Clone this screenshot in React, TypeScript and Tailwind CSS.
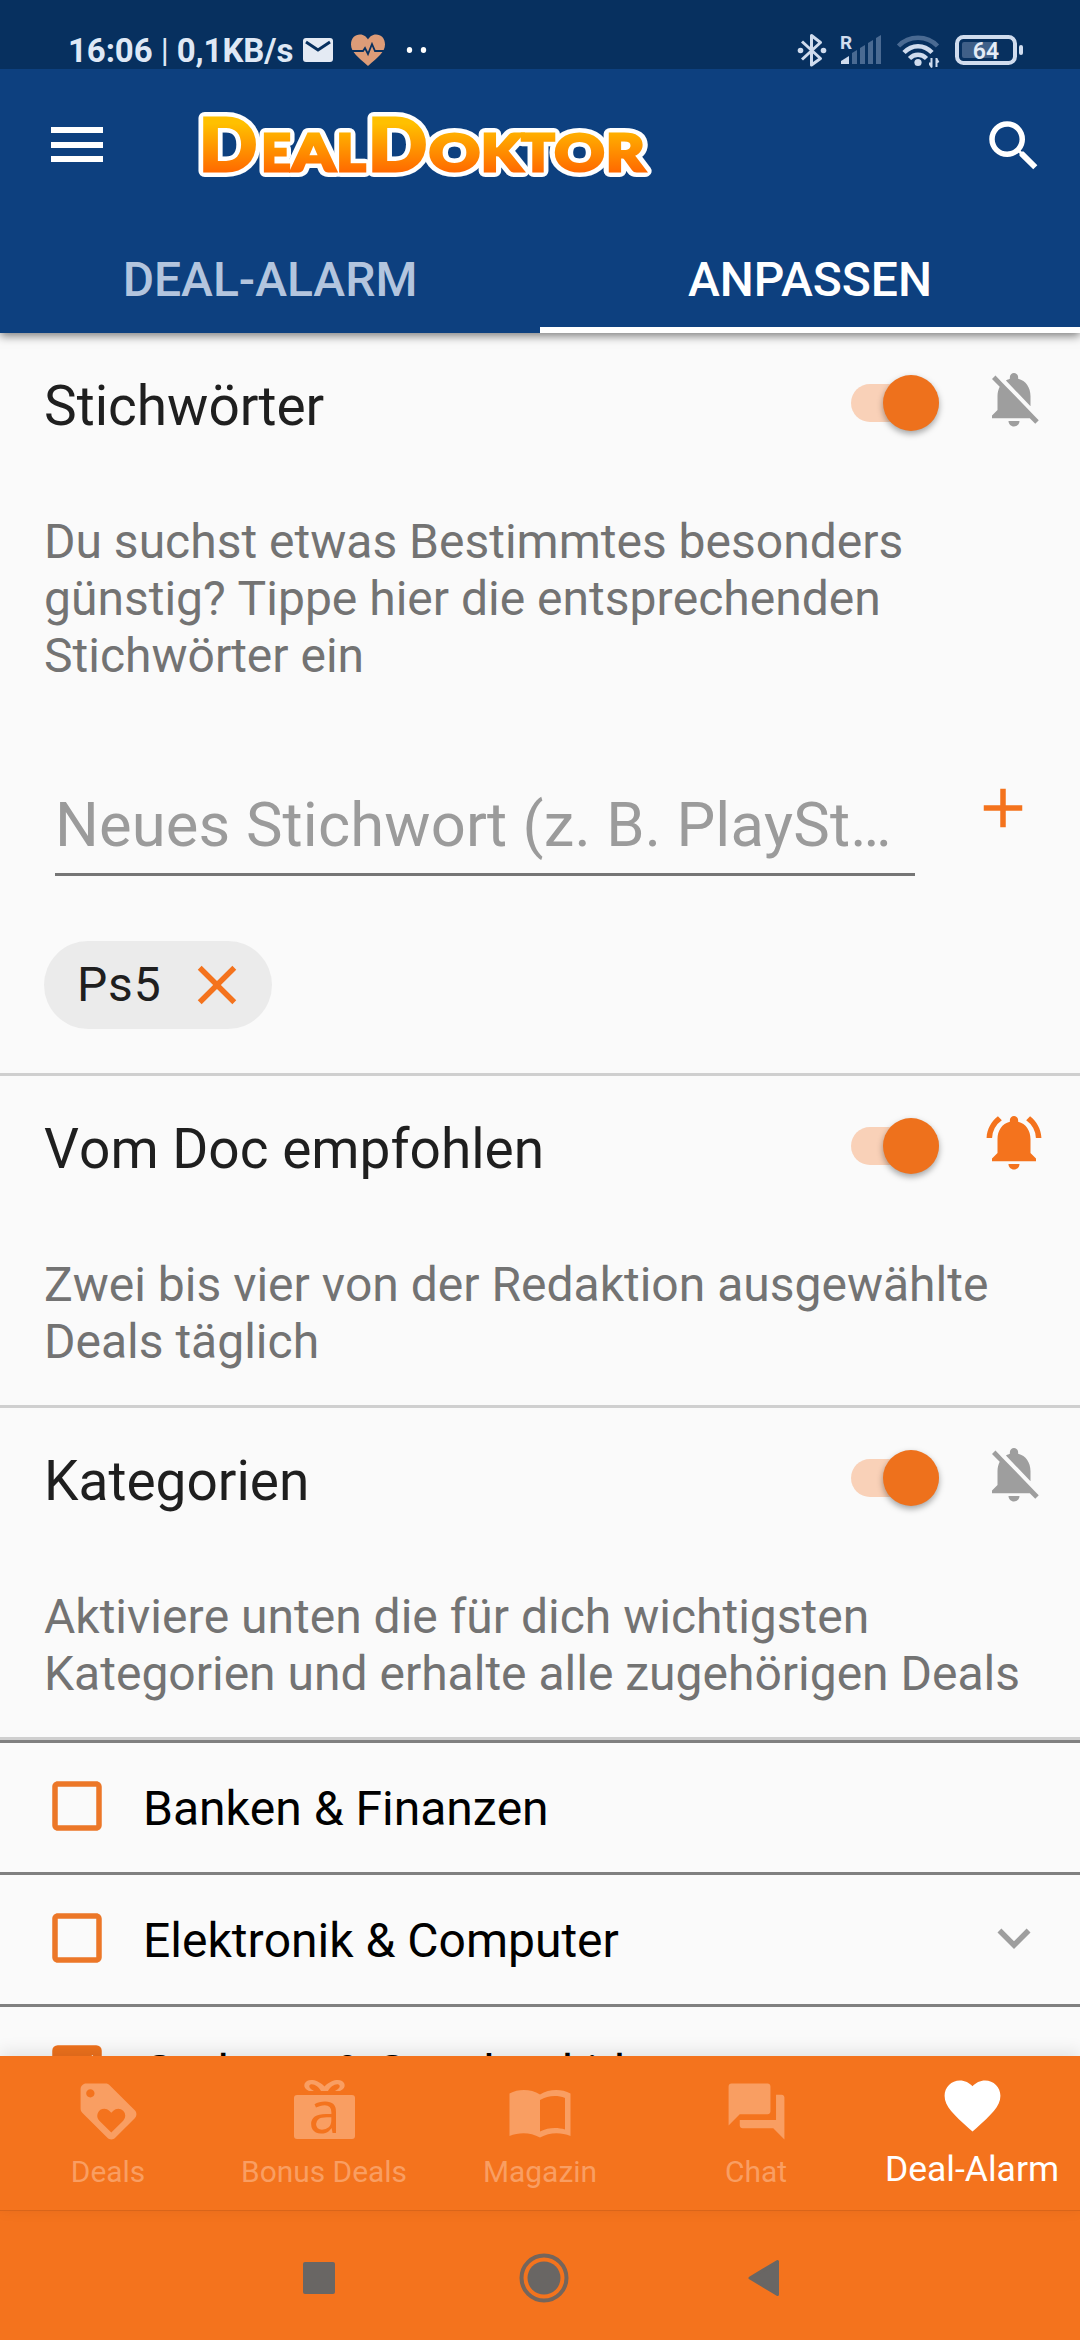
import { useState } from "react";
import {
  MdAdd,
  MdCheckBox,
  MdCheckBoxOutlineBlank,
  MdClose,
  MdExpandMore,
  MdFavorite,
  MdForum,
  MdLoyalty,
  MdNotificationsActive,
  MdNotificationsOff,
  MdSearch,
} from "react-icons/md";

function StatusBar() {
  return (
    <div className="flex h-[69px] items-start bg-[#07305f] text-[#dfe8f5]">
      <div className="flex h-[69px] items-center pt-[33px] pl-[68px]">
        <span className="w-[235px] text-[33px] leading-[36px] font-bold tracking-[-0.1px] whitespace-nowrap">
          16:06 <span className="font-normal">|</span> 0,1KB/s
        </span>
        <svg className="h-[36px] w-[130px]" viewBox="303 33 130 36">
          <rect x="303" y="38" width="30" height="24" rx="3" fill="#e4eaf4" />
          <path d="M306 42l12 8 12-8" fill="none" stroke="#07305f" strokeWidth="3" />
          <path d="M368 66C358 57 351 52 351 44.500C351 38 355 34.500 360 34.500C364 34.500 366.500 37 368 39.500C369.500 37 372 34.500 376 34.500C381 34.500 385 38 385 44.500C385 52 378 57 368 66Z" fill="#dd9c78" />
          <path d="M351 51h12l2-3 3 6 4-10 3 7h10" fill="none" stroke="#07305f" strokeWidth="1.800" />
          <ellipse cx="409.500" cy="50" rx="2.700" ry="3" fill="#fff" />
          <ellipse cx="423.500" cy="50" rx="2.700" ry="3" fill="#fff" />
        </svg>
      </div>
      <svg className="ml-auto h-[69px] w-[290px]" viewBox="790 0 290 69" fill="#d0dcee">
        <path d="M802 41.500L820.500 58.500L811.500 65V35.500L820.500 42.500L802 59.500" fill="none" stroke="#d0dcee" strokeWidth="3" strokeLinejoin="round" />
        <circle cx="800.500" cy="50.500" r="2.800" />
        <circle cx="823.500" cy="50.500" r="2.800" />
        <text x="840" y="48.500" fontSize="19" fontWeight="700">R</text>
        <path d="M841 64v-3l8-5v8z" />
        <g fill="#4a6a92">
          <path d="M852 64V53l5-3v14z" />
          <path d="M860 64V48l5-3v19z" />
          <path d="M868 64V43l5-3v24z" />
          <path d="M876 64V38l5-3v29z" />
        </g>
        <g fill="none" strokeWidth="4.500">
          <path d="M898.500 46C909 35 927 35 937.500 46" stroke="#4a6a92" />
          <path d="M904 52.500C912 44 924 44 932 52.500" stroke="#d0dcee" />
          <path d="M909.500 58.500C914.500 53.500 921.500 53.500 926.500 58.500" stroke="#d0dcee" />
        </g>
        <circle cx="918" cy="62.500" r="3.600" />
        <path d="M931.500 58v9M936.500 58v9M930 62.500v2l2 3M938.500 62.500l-2-3.500" fill="none" stroke="#d0dcee" strokeWidth="2" />
        <rect x="957" y="37" width="58" height="26" rx="6.500" fill="none" stroke="#d0dcee" strokeWidth="4" />
        <rect x="962" y="42" width="31" height="16" rx="2" fill="#3f5f88" />
        <rect x="1019" y="45" width="4" height="10" rx="2" />
        <text x="986" y="59" fontSize="23" fontWeight="600" textAnchor="middle" fill="#e4ecf7">64</text>
      </svg>
    </div>
  );
}

// x and width per letter, the two capitals are set larger
const LOGO_LETTERS = [
  { char: "D", x: 199, width: 58, size: 73 },
  { char: "E", x: 261.5, width: 29, size: 52 },
  { char: "A", x: 292, width: 43, size: 52 },
  { char: "L", x: 336.5, width: 29, size: 52 },
  { char: "D", x: 368, width: 59, size: 73 },
  { char: "O", x: 429, width: 51, size: 52 },
  { char: "K", x: 481, width: 41, size: 52 },
  { char: "T", x: 521.5, width: 33, size: 52 },
  { char: "O", x: 554.5, width: 50, size: 52 },
  { char: "R", x: 606, width: 38.5, size: 52 },
];

function Logo() {
  return (
    <svg className="h-[104px] w-[470px] font-['Lato',sans-serif] font-black" viewBox="190 90 470 104" aria-label="DealDoktor">
      <defs>
        <linearGradient id="logo" gradientUnits="userSpaceOnUse" x1="0" y1="118" x2="0" y2="172">
          <stop offset="0.1" stopColor="#ffc000" />
          <stop offset="1" stopColor="#ff6a00" />
        </linearGradient>
      </defs>
      {["outline", "fill"].map((layer) => (
        <g
          key={layer}
          fill={layer === "fill" ? "url(#logo)" : "#fff"}
          stroke={layer === "fill" ? "url(#logo)" : "#fff"}
          strokeWidth={layer === "fill" ? 3 : 12}
          strokeLinejoin={layer === "fill" ? "miter" : "round"}
        >
          {LOGO_LETTERS.map((l) => (
            <text key={l.x} x={l.x} y="171.200" fontSize={l.size} textLength={l.width} lengthAdjust="spacingAndGlyphs">
              {l.char}
            </text>
          ))}
        </g>
      ))}
    </svg>
  );
}

function Header() {
  return (
    <header className="relative z-10 bg-[#0d407f] shadow-[0_3px_9px_rgba(0,0,0,0.5)]">
      <StatusBar />
      <div className="flex h-[156px] items-start pt-[21px]">
        <button className="mt-[37px] ml-[51px] flex w-[52px] flex-col gap-[8.500px]" aria-label="Menü">
          <span className="h-[6px] w-full bg-white" />
          <span className="h-[6px] w-full bg-white" />
          <span className="h-[6px] w-full bg-white" />
        </button>
        <div className="ml-[87px]">
          <Logo />
        </div>
        <button className="mt-[23px] mr-[33px] ml-auto text-white" aria-label="Suche">
          <MdSearch className="size-[66px]" />
        </button>
      </div>
      <nav className="grid h-[108px] grid-cols-2 text-center text-[48px] leading-[102px] font-medium [font-kerning:normal]">
        <a className="pt-[4px] text-[#b3c5de]">DEAL-ALARM</a>
        <a className="flex flex-col justify-between pt-[4px] text-white">
          <span className="h-[98px]">ANPASSEN</span>
          <span className="h-[6px] bg-white" />
        </a>
      </nav>
    </header>
  );
}

function Toggle() {
  const [on, setOn] = useState(true);

  return (
    <button
      className={on ? "flex h-[38px] w-[88px] items-center justify-end rounded-full bg-[#f9d1b8]" : "flex h-[38px] w-[88px] items-center rounded-full bg-[#bdbdbd]"}
      onClick={() => setOn(!on)}
      role="switch"
      aria-checked={on}
    >
      <span className="size-[56px] shrink-0 rounded-full bg-[#ee711c] shadow-[0_3px_6px_rgba(0,0,0,0.35)]" />
    </button>
  );
}

interface SectionProps {
  title: string;
  lines: string[];
  notify?: boolean;
  children?: React.ReactNode;
}

function Section({ title, lines, notify, children }: SectionProps) {
  return (
    <section className="border-b-[3px] border-[#cfcfcf]">
      <div className="flex h-[140px] items-center pr-[33px] pl-[44px]">
        <h2 className="pt-[6px] text-[55px] leading-[66px] text-[#1f1f1f]">{title}</h2>
        <div className="ml-auto">
          <Toggle />
        </div>
        <div className="ml-[42px] pb-[8px]">
          {notify ? (
            <MdNotificationsActive className="size-[66px] text-[#f4731d]" />
          ) : (
            <MdNotificationsOff className="size-[66px] text-[#9e9e9e]" />
          )}
        </div>
      </div>
      <p className="px-[44px] pt-[40px] pb-[35px] text-[48px] leading-[57px] whitespace-nowrap text-[#737373]">
        {lines.map((line) => (
          <span key={line} className="block">
            {line}
          </span>
        ))}
      </p>
      {children}
    </section>
  );
}

function KeywordInput() {
  return (
    <>
      <div className="flex h-[222px] items-start pr-[44px] pl-[55px]">
        <div className="mt-[63px] h-[94px] w-[860px] border-b-[3px] border-[#757575] text-[61.500px] leading-[86px] tracking-[0.15px] whitespace-nowrap text-[#9b9b9b]">
          Neues Stichwort (z. B. PlaySt…
        </div>
        <MdAdd className="mt-[56px] ml-auto size-[66px] text-[#f4731d]" />
      </div>
      <div className="h-[132px] pl-[44px]">
        <div className="flex h-[88px] w-[228px] items-center rounded-full bg-[#ebebeb] pl-[33px] text-[48px] tracking-[0.8px] text-[#1f1f1f]">
          Ps5
          <MdClose className="mr-[22px] ml-auto size-[66px] text-[#f4731d]" />
        </div>
      </div>
    </>
  );
}

const CATEGORIES = [
  { name: "Banken & Finanzen", checked: false, expandable: false },
  { name: "Elektronik & Computer", checked: false, expandable: true },
  { name: "Gadgets & Geschenkideen", checked: true, expandable: true },
];

function CategoryList() {
  return (
    <ul>
      {CATEGORIES.map((c) => (
        <li key={c.name} className="flex h-[132px] items-center border-t-[3px] border-[#808080] pr-[33px] pl-[44px]">
          {c.checked ? (
            <MdCheckBox className="mb-[3px] size-[66px] text-[#ee711c]" />
          ) : (
            <MdCheckBoxOutlineBlank className="mb-[3px] size-[66px] text-[#ec7728]" />
          )}
          <span className="ml-[33px] pt-[1px] text-[48px] leading-[57px] text-black">{c.name}</span>
          {c.expandable && <MdExpandMore className="mb-[3px] ml-auto size-[66px] text-[#9e9e9e]" />}
        </li>
      ))}
    </ul>
  );
}

function GiftIcon() {
  return (
    <svg className="h-[67px] w-[67px]" viewBox="291 2078 67 67">
      <rect x="294" y="2095" width="61" height="44" rx="3" fill="currentColor" />
      <path d="M324.500 2086.500C318 2080 311 2079 307 2081C302.500 2084 304 2089 309 2091H314C309.500 2088.500 308 2086 310.500 2084.500C314 2083.500 319 2087 321 2091H328C330 2087 335 2083.500 338.500 2084.500C341 2086 339.500 2088.500 335 2091H340C345 2089 346.500 2084 342 2081C338 2079 331 2080 324.500 2086.500Z" fill="currentColor" />
      <text x="324.500" y="2132.500" fontSize="58" textAnchor="middle" fill="#f4731d" className="font-['Open_Sans',sans-serif]">a</text>
    </svg>
  );
}

function BookIcon() {
  return (
    <svg className="h-[67px] w-[67px]" viewBox="507 2078 67 67" fill="currentColor">
      <path d="M540 2094.500c-9-5.500-21-6-30.500-1v42.500c9.500-4 21-4 30.500 1.500c9.500-5.500 21-5.500 30.500-1.500v-42.500c-9.500-5-21.500-4.500-30.500 1zM565 2129.500c-8-2.500-17-2-25 2v-31.500c8-4.500 17-5 25-2z" fillRule="evenodd" />
    </svg>
  );
}

function BottomNav() {
  return (
    <nav className="relative z-10 grid h-[155px] grid-cols-5 border-b border-[#d9651a] bg-[#f4731d] text-center text-[29.900px] leading-[36px] text-[#f99e62] shadow-[0_-4px_16px_rgba(0,0,0,0.1)]">
      <a className="flex flex-col items-center pt-[22px]">
        <MdLoyalty className="size-[67px]" />
        <span className="mt-[9px]">Deals</span>
      </a>
      <a className="flex flex-col items-center pt-[22px]">
        <GiftIcon />
        <span className="mt-[9px]">Bonus Deals</span>
      </a>
      <a className="flex flex-col items-center pt-[22px]">
        <BookIcon />
        <span className="mt-[9px]">Magazin</span>
      </a>
      <a className="flex flex-col items-center pt-[22px]">
        <MdForum className="size-[67px]" />
        <span className="mt-[9px]">Chat</span>
      </a>
      <a className="flex flex-col items-center pt-[16px] text-[35.500px] text-white">
        <MdFavorite className="size-[67px]" />
        <span className="mt-[12px]">Deal-Alarm</span>
      </a>
    </nav>
  );
}

function SystemNav() {
  return (
    <div className="flex h-[129px] items-center bg-[#f4731d] pt-[5px] pl-[303px]">
      <span className="size-[32px] rounded-[2px] bg-[#696664]" />
      <svg className="ml-[184px] size-[50px]" viewBox="0 0 50 50">
        <circle cx="25" cy="25" r="22.500" fill="none" stroke="#75655b" strokeWidth="4" />
        <circle cx="25" cy="25" r="16.500" fill="#696664" />
      </svg>
      <svg className="ml-[179px] h-[38px] w-[32px]" viewBox="0 0 32 38">
        <path d="M2 19L29.500 2.500v33z" fill="#696664" stroke="#696664" strokeWidth="3" strokeLinejoin="round" />
      </svg>
    </div>
  );
}

export default function App() {
  return (
    <div className="flex h-[2340px] w-[1080px] flex-col overflow-hidden bg-[#fafafa] font-['Roboto',sans-serif] [font-kerning:none]">
      <Header />
      <main className="h-[1723px] overflow-hidden">
        <Section
          title="Stichwörter"
          lines={["Du suchst etwas Bestimmtes besonders", "günstig? Tippe hier die entsprechenden", "Stichwörter ein"]}
        >
          <KeywordInput />
        </Section>
        <Section
          title="Vom Doc empfohlen"
          lines={["Zwei bis vier von der Redaktion ausgewählte", "Deals täglich"]}
          notify
        />
        <Section
          title="Kategorien"
          lines={["Aktiviere unten die für dich wichtigsten", "Kategorien und erhalte alle zugehörigen Deals"]}
        />
        <CategoryList />
      </main>
      <BottomNav />
      <SystemNav />
    </div>
  );
}
